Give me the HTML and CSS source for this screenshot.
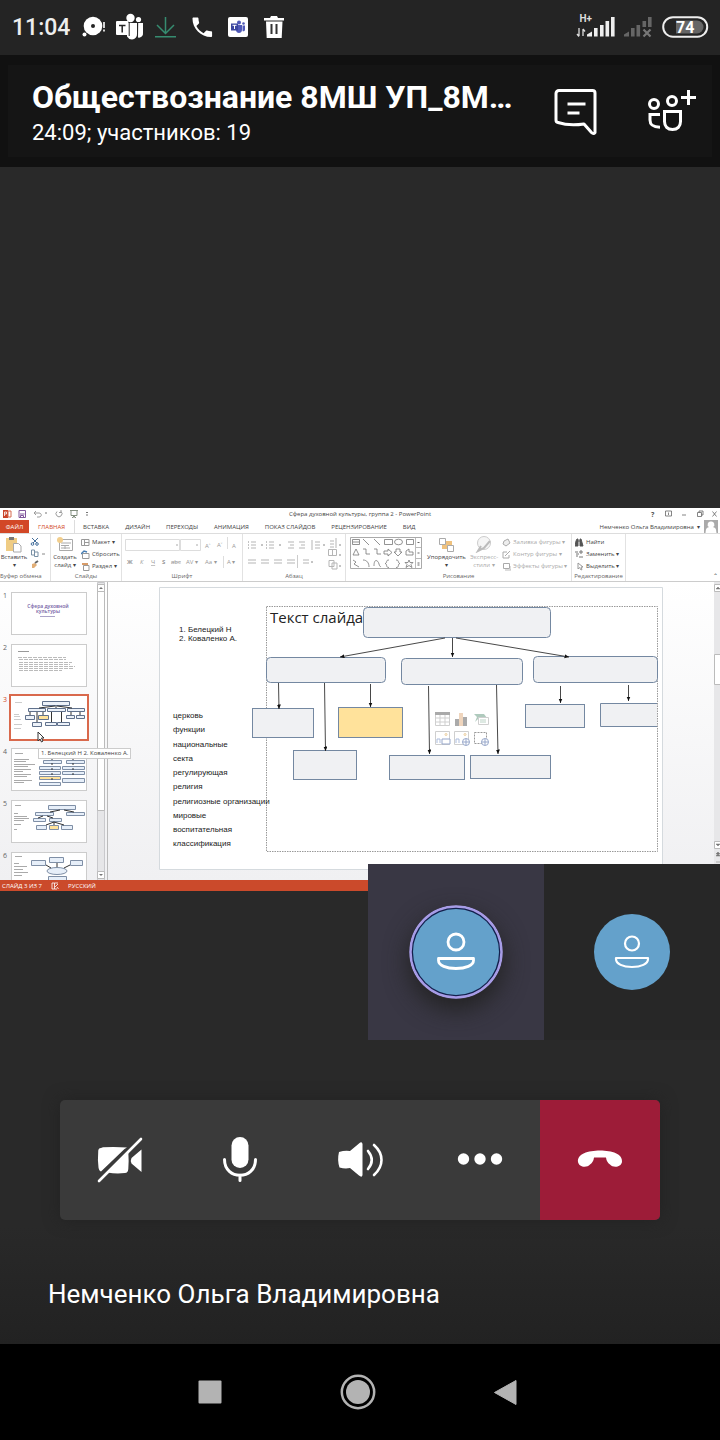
FILE: index.html
```html
<!DOCTYPE html>
<html lang="ru">
<head>
<meta charset="utf-8">
<meta name="viewport" content="width=device-width, initial-scale=1">
<title>Обществознание 8МШ</title>
<link rel="stylesheet" href="styles.css">
</head>
<body>
<div class="phone">
  <div class="statusbar">
    <time class="clock">11:04</time>
    <svg class="notices" width="206" height="32" viewBox="80 12 206 32" aria-hidden="true">
      <circle cx="93" cy="26" r="9.300" fill="#fff"/><circle cx="93" cy="26" r="2" fill="#242424"/><circle cx="84.500" cy="34.500" r="2" fill="#fff"/><path d="M104 22v6M104 29.500v2" stroke="#fff" stroke-width="1.600"/>
      <g fill="#fff"><circle cx="130.500" cy="18" r="4.200"/><circle cx="138.500" cy="19.500" r="2.600"/><path d="M127 23h10v11a5 5 0 0 1-5 5.500a6 6 0 0 1-5-3zM138.200 23h4.800v10a4 4 0 0 1-5 4.500z"/><rect x="116" y="21" width="12.500" height="14" rx="1"/></g><path d="M119 25.500h6.500M122.200 25.500v7" stroke="#242424" stroke-width="1.500"/><path d="M129.200 22v14" stroke="#242424"/>
      <path d="M165.500 17v16M157 25l8.500 8.500 8.500-8.500M155 36.700h21" fill="none" stroke="#368c70" stroke-width="1.500"/>
      <path transform="translate(189.200 14.200) scale(1.090)" fill="#fff" d="M6.600 10.800c1.400 2.800 3.800 5.100 6.600 6.600l2.200-2.200c.3-.3.700-.4 1-.2 1.100.4 2.300.6 3.600.6.600 0 1 .4 1 1V20c0 .6-.4 1-1 1C10.600 21 3 13.400 3 4c0-.6.400-1 1-1h3.500c.6 0 1 .4 1 1 0 1.300.2 2.500.6 3.600.1.300 0 .7-.2 1z"/>
      <rect x="228" y="17" width="20" height="20" rx="2" fill="#fff"/><g fill="#5059b8"><circle cx="239" cy="22.500" r="2"/><circle cx="243.500" cy="23.500" r="1.300"/><path d="M236 25h6v5c0 4-6 4-6 0zM242.500 25.500h2.500v4c0 2-2.500 2.500-2.500 1z"/></g><rect x="231" y="23.500" width="7" height="7" fill="#3b459f"/><path d="M232.500 25.300h4M234.500 25v4" stroke="#fff"/>
      <path d="M264 18h6l1-2h6l1 2h6v2.500h-20zM266 21.500h16.500l-.8 16.500h-15z" fill="#fff"/><path d="M271.500 24v10M276.500 24v10" stroke="#333" stroke-width="2"/>
    </svg>
    <svg class="signals" width="134" height="30" viewBox="575 13 134 30" role="img" aria-label="H+, заряд 74">
      <text class="net" x="579.500" y="22">H+</text>
      <path d="M579 28v8m-2-2l2 2.500M583 36v-7m0 0l2 2.500" stroke="#ddd" stroke-width="1.300" fill="none"/>
      <path fill="#eee" d="M587 36.500v-2l5-3v5zM594 28h3.600v8.500H594zM600 25h3.600v11.500H600zM605.500 21h3.600v15.500h-3.600zM611 17h3.600v19.500H611z"/>
      <path fill="#666" d="M624 36.500v-2l5-3v5zM631 28h3.600v8.500H631zM636.500 25h3.600v11.500h-3.600zM642.500 21h3.600v6h-3.600zM648 17h3.600v10H648z"/><path d="M643.500 29.500l7 7m0-7l-7 7" stroke="#777" stroke-width="2.200"/>
      <rect x="663.200" y="17.200" width="44" height="19.500" rx="9.700" fill="none" stroke="#eee" stroke-width="2"/><path d="M676 20.500h21a6.500 6.500 0 0 1 0 13h-21z" fill="#666"/>
      <text class="charge" x="676" y="33">74</text>
    </svg>
  </div>

  <header class="callhead">
    <div class="headtext">
      <h1>Обществознание 8МШ УП_8М…</h1>
      <p>24:09; участников: 19</p>
    </div>
    <button class="iconbtn" aria-label="Чат">
      <svg width="44" height="48" viewBox="0 0 44 48" fill="none" stroke="#fff" stroke-width="3" stroke-linejoin="round"><path d="M5 3.500h33.500a2.500 2.500 0 0 1 2.500 2.500v39.500q-1.500 2-3.500 0l-7.500-8.500c-8 1.200-18 1.200-26-1.500a2.500 2.500 0 0 1-2-2.500V6.500a3 3 0 0 1 3-3z"/><path d="M13.500 17h18M13.500 26h12"/></svg>
    </button>
    <button class="iconbtn" aria-label="Добавить участников">
      <svg width="50" height="44" viewBox="0 2 50 44" fill="none" stroke="#fff" stroke-width="3"><g transform="translate(1 3)"><circle cx="7" cy="14" r="4.500"/><circle cx="25" cy="11" r="4.500"/><path d="M13 24.500H3v5.500c0 5 3 7 10 7.200M17.500 21.500h16v10c0 5-3 8-8 8s-8-3-8-8zM41.500 0v15M34 7.500h15"/></g></svg>
    </button>
  </header>

  <main class="stage">
    <section class="share" aria-label="Демонстрация экрана">
      <div class="titlebar">
        <svg width="90" height="10" viewBox="0 0 90 10" aria-hidden="true"><path d="M3 1h5v8H3z" fill="#c9442a"/><path d="M8 2h3v6H8z" fill="none" stroke="#d66b50"/><path d="M4.500 7V3h2v2h-2" stroke="#fff" fill="none" stroke-width=".8"/><path d="M19 1.500h6.500v7H19zM20 5h4.500M20.500 8V6.500h3V8" fill="none" stroke="#80569c"/><path d="M34 4h5c3 0 3 4 0 4h-2M36 2l-2 2 2 2M61 2.500a3 3 0 1 1-4 0M61 1v2.500h-2" fill="none" stroke="#9c9c9c"/><path d="M70 1.500h8M71 2v4.500h6V2M74 7v2M72 9l2-2 2 2" fill="none" stroke="#849080"/><path d="M45 4h2M86 3.500h2M86 6h2" stroke="#777"/></svg>
        <span class="doc">Сфера духовной культуры, группа 2 - PowerPoint</span>
        <svg class="winbtns" width="70" height="10" viewBox="648 0 70 10" aria-hidden="true"><text class="small" x="651" y="7.500">?</text><path d="M665.500 2h6v5h-6zM668.500 6V3.500M682 6h4M697.500 3.500h4v4h-4zM699 3.500V2h4v4h-1.500M712.500 2.500l4 5m0-5l-4 5" fill="none" stroke="#666" stroke-width=".8"/></svg>
      </div>
      <div class="tabs">
        <b class="file">ФАЙЛ</b><span class="active">ГЛАВНАЯ</span><span>ВСТАВКА</span><span>ДИЗАЙН</span><span>ПЕРЕХОДЫ</span><span>АНИМАЦИЯ</span><span>ПОКАЗ СЛАЙДОВ</span><span>РЕЦЕНЗИРОВАНИЕ</span><span>ВИД</span>
        <em>Немченко Ольга Владимировна&nbsp; ▾</em>
        <svg width="14" height="13" viewBox="0 0 14 13" aria-hidden="true"><path d="M0 0h14v13H0z" fill="#aaa"/><path d="M7 1.500a3 3 0 0 1 2 5.500c3 1 3 2 3.500 6h-11c.5-4 .5-5 3.500-6a3 3 0 0 1 2-5.500z" fill="#fff"/></svg>
      </div>
      <div class="ribbon">
        <div class="group">
          <div class="tools">
            <div class="big"><svg width="18" height="17" viewBox="0 0 18 17"><path d="M1 2h11v13H1z" fill="#efcc84"/><path d="M4 1h5v3H4z" fill="#777"/><path d="M8.500 7.500h5l2.500 2.500v6H8.500z" fill="#fff" stroke="#aaa"/></svg><span>Вставить</span><i>▾</i></div>
            <svg width="16" height="34" viewBox="0 0 16 34"><path d="M2 2l5 5M8 2L3 7" stroke="#456f9c"/><circle cx="2.500" cy="8" r="1.300" fill="none" stroke="#456f9c"/><circle cx="7" cy="8" r="1.300" fill="none" stroke="#456f9c"/><path d="M1.500 14h3v5h-3zM4.500 16H8v4.500H4.500z" fill="#fff" stroke="#7890a5"/><path d="M12 18h3" stroke="#888"/><path d="M2 28l3-1 2 2-3 3-2 0z" fill="#e1ae77"/><path d="M5 27l3-2" stroke="#666" stroke-width="2"/></svg>
          </div>
          <small class="start">Буфер обмена</small>
        </div>
        <div class="group">
          <div class="tools">
            <div class="big"><svg width="18" height="17" viewBox="0 0 18 17"><path d="M3.500 3.500h13v11h-13zM5 7h10M9 9v4M5 9.500h8M5 12h9" fill="none" stroke="#aaa"/><circle cx="4" cy="4" r="3" fill="#f2ce8c"/></svg><span>Создать</span><span>слайд ▾</span></div>
            <ul><li><svg width="9" height="9" viewBox="0 0 9 9"><path d="M.5 1.500h7.500v6H.5zM3.500 2v5M3.500 4.500H8" fill="none" stroke="#999"/></svg>Макет ▾</li><li><svg width="9" height="9" viewBox="0 0 9 9"><path d="M1.500 3.500H8v5H1.500z" fill="none" stroke="#999"/><path d="M0 4l3-3 3 1" stroke="#477eb4" fill="none" stroke-width="1.500"/></svg>Сбросить</li><li><svg width="9" height="9" viewBox="0 0 9 9"><path d="M2.500 3.500H8v5H2.500z" fill="none" stroke="#999"/><path d="M1 2h6" stroke="#d89c69" stroke-width="2"/></svg>Раздел ▾</li></ul>
          </div>
          <small>Слайды</small>
        </div>
        <div class="group">
          <div class="tools">
            <svg class="fill" viewBox="124 536 118 36" aria-hidden="true"><path d="M126.500 539.500h54v11h-54zM181.500 539.500h20v11h-20z" fill="#fff" stroke="#ddd"/><path d="M177 545h2M197 545h2" stroke="#aaa"/><g class="pale"><text x="206" y="548">A˄</text><text x="218" y="547">A˅</text><text x="233" y="548">A</text><text x="128" y="564" font-weight="bold">Ж</text><text x="141" y="564" font-style="italic">К</text><text x="152" y="564" text-decoration="underline">Ч</text><text x="163" y="564" font-weight="bold">S</text><text x="172" y="564" text-decoration="line-through">abc</text><text x="187" y="564">AV ▾</text><text x="206" y="564">Aa ▾</text><text x="228" y="564">A ▾</text></g><path d="M228.500 537v12M224.500 556v12" stroke="#ddd"/></svg>
          </div>
          <small>Шрифт</small>
        </div>
        <div class="group">
          <div class="tools">
            <svg class="fill" viewBox="244 536 102 36" aria-hidden="true"><path d="M252 542h5M252 545h5M252 548h5M270 542h5M270 545h5M270 548h5M289 542h6M291 545h4M289 548h6M300 542h6M302 545h4M300 548h6M316 542h5M316 545h5M316 548h5M313 540v10M249 560h8M249 563h8M262 560h8M262 563h8M275 560h8M275 563h8M288 560h8M288 563h8M304 560h6M304 563h6M331 541h4M331 544h4M331 547h4M337 538v10" stroke="#b5b5b5"/><path d="M249 542h1M249 545h1M249 548h1M267 542h1M267 545h1M267 548h1M262 545h2M280 545h2M324 545h2M312 562h2M340 545h2M340 555h2M340 566h2" stroke="#888"/><path d="M298.500 555v13" stroke="#ccc"/><path d="M329.500 549.500h8v6h-8zM333.500 550v5M330 560.500h5v6h-5zM333 563h5v6h-5z" fill="none" stroke="#b5b5b5"/></svg>
          </div>
          <small>Абзац</small>
        </div>
        <div class="group">
          <div class="tools wide">
            <svg width="74" height="36" viewBox="349 536 74 36" aria-hidden="true"><path d="M350.500 537.500h71v31h-71z" fill="#fff" stroke="#aaa"/><path d="M415.500 538v30M416 547.500h5M416 558.500h5" stroke="#bbb"/><g fill="none" stroke="#777" stroke-width=".8"><path d="M352.500 539.500h7v5h-7zM353 542h6M363 539l6 6M374 539l6 6M384.500 539.500h8v5h-8zM406.500 539.500h7v5h-7zM353 555l3-6 3 6zM363 549h3v5h4M374 549h3v5h4M384 551h4v-2l4 3.500-4 3.500v-2h-4zM396 549h4v3h2l-4 4-4-4h2zM406 555v-4l3-2v3h4v3zM353 560l3 2-2 2 5 3M363 560c4 0 6 3 6 7M374 566c0-8 4-6 5-2s2 2 2 2M389 560c-4 0-1 3-4 3.500 3 .5 0 4 4 4M396 560c4 0 1 3 4 3.500-3 .5 0 4-4 4M409 560l1 2.500h3l-2 2 1 3-3-2-3 2 1-3-2-2h3z"/><ellipse cx="398.500" cy="542" rx="4" ry="2.800"/></g><path d="M417.500 542.500h2M417.500 553h2M417.500 563h2M417.500 565h2" stroke="#666"/></svg>
            <div class="big"><svg width="18" height="17" viewBox="0 0 18 17"><path d="M5 5h10v8H5z" fill="#efc17d"/><path d="M2.500 2.500h6v6h-6zM10.500 9.500h6v6h-6z" fill="#fff" stroke="#aaa"/></svg><span>Упорядочить</span><i>▾</i></div>
            <div class="big dim"><svg width="18" height="17" viewBox="0 0 18 17"><circle cx="9" cy="7" r="6.500" fill="#f5f5f5" stroke="#ccc"/><path d="M15 5l-6 7-6 3 3-5" fill="none" stroke="#bbb" stroke-width="2"/></svg><span>Экспресс-</span><span>стили ▾</span></div>
            <ul class="dim"><li><svg width="9" height="9" viewBox="0 0 9 9"><path d="M2 3l4-2 2 4-4 3-3-2z" fill="#eee" stroke="#aaa"/></svg>Заливка фигуры ▾</li><li><svg width="9" height="9" viewBox="0 0 9 9"><path d="M7 5v3H1V2h4M3 6l5-5" fill="none" stroke="#aaa"/></svg>Контур фигуры ▾</li><li><svg width="9" height="9" viewBox="0 0 9 9"><path d="M1.500 1.500h6v5h-6z" fill="#fff" stroke="#aaa"/><path d="M3 8h6V4" fill="none" stroke="#bbb"/></svg>Эффекты фигуры ▾</li></ul>
          </div>
          <small>Рисование</small>
        </div>
        <div class="group">
          <div class="tools wide">
            <ul><li><svg width="9" height="9" viewBox="0 0 9 9"><path d="M1 3l1-2h1v7H0zM5 1h1l2 7H5zM3 3h2" fill="#555" stroke="#555"/></svg>Найти</li><li><svg width="9" height="9" viewBox="0 0 9 9"><path d="M0 2h3M1 4h3M4 7h4M5 1h2v2H5zM1 6h2" stroke="#777" fill="none"/></svg>Заменить ▾</li><li><svg width="9" height="9" viewBox="0 0 9 9"><path d="M3 1v6l1.500-1.500L6 8l1-.5L6 5h2z" fill="#fff" stroke="#999"/></svg>Выделить ▾</li></ul>
          </div>
          <small>Редактирование</small>
        </div>
        <div class="rest">⌃</div>
      </div>

      <div class="workspace">
        <ol class="thumbs">
          <li>1<svg width="76" height="43" viewBox="0 0 76 43"><text class="tt" x="37" y="16">Сфера духовной</text><text class="tt" x="37" y="21">культуры</text><path d="M29 24.500h15" stroke="#aaa3c8"/></svg></li>
          <li>2<svg width="76" height="43" viewBox="0 0 76 43"><path d="M7 7.500h11" stroke="#999"/><path d="M7 13.500h48M8 15.500h47M8 18.500h53M8 20.500h51M8 22.500h56M8 24.500h55M8 26.500h43" stroke="#bbb" stroke-dasharray="4 1"/></svg></li>
          <li class="current">3<svg width="76" height="43" viewBox="0 0 76 43"><g fill="#edf2f9" stroke="#60718c"><path d="M31.500 5.500h27v4h-27zM17.500 12.500h17v3h-17zM36.500 12.500h18v3h-18zM56.500 12.500h17v3h-17zM14.500 19.500h9v4h-9zM55.500 19.500h8v3h-8zM65.500 19.500h8v3h-8zM21.500 26.500h9v4h-9zM34.500 26.500h11v3h-11zM46.500 26.500h12v3h-12z"/><path d="M27.500 19.500h10v4h-10z" fill="#ffe29b"/></g><path d="M44 10l-16 2M45 10v2M46 10l15 2M19 16v3M26 16v10M32 16v3M40.500 16v10M50.500 16v10M60 16v3M69 16v3" stroke="#333" fill="none"/><path d="M4 6.500h7M3 18.500h5M3 20.500h6M3 23.500h7M3 28.500h8M3 32.500h7" stroke="#ccc"/></svg></li>
          <li>4<svg width="76" height="43" viewBox="0 0 76 43"><g fill="#e7eff9" stroke="#7f8fa6"><path d="M32.500 12.500h18v3h-18zM55.500 12.500h18v3h-18zM28.500 18.500h21v3h-21zM51.500 18.500h22v3h-22zM28.500 23.500h21v3h-21zM51.500 23.500h22v3h-22zM51.500 30.500h22v4h-22zM28.500 34.500h21v3h-21z"/><path d="M28.500 28.500h21v3h-21z" fill="#ffe29b"/></g><path d="M41 10v24M62 10v20M43 10l6-2" stroke="#333" fill="none" stroke-dasharray="2 3"/><path d="M4 5.500h8M3 11.500h15M3 13.500h12M3 16.500h21M3 18.500h14M3 21.500h17M3 23.500h9M3 26.500h17M3 28.500h13M3 32.500h18M3 34.500h10" stroke="#aaa"/></svg></li>
          <li>5<svg width="76" height="43" viewBox="0 0 76 43"><g fill="#e7eff9" stroke="#7f8fa6"><path d="M37.500 5.500h27v4h-27zM24.500 12.500h18v3h-18zM55.500 12.500h18v3h-18zM22.500 18.500h12v3h-12zM38.500 18.500h12v3h-12zM25.500 25.500h10v4h-10zM50.500 25.500h11v4h-11z"/><path d="M38.500 25.500h9v4h-9z" fill="#ffe29b"/></g><path d="M49 10l-10 2M53 10l10 2M32 16l-5 2M36 16l6 2M43 22l-8 3M43 22v3M43 22l10 3" stroke="#333"/><path d="M4 5.500h6M3 13.500h4M3 16.500h13M3 18.500h15M3 20.500h10M3 24.500h7M3 29.500h3" stroke="#aaa"/></svg></li>
          <li>6<svg width="76" height="43" viewBox="0 0 76 43"><g fill="#e7eff9" stroke="#7f8fa6"><path d="M38.500 5.500h14v5h-14zM20.500 8.500h14v5h-14zM59.500 8.500h12v5h-12zM37.500 24.500h18v4h-18z"/><ellipse cx="46" cy="19" rx="10" ry="3.500"/></g><path d="M35 13l5 3M46 11v4M59 13l-6 3" stroke="#333"/><path d="M4 4.500h7M3 11.500h5M3 14.500h13M3 17.500h9M3 20.500h14M3 23.500h8" stroke="#aaa"/></svg></li>
        </ol>
        <svg class="pointer" width="8" height="12" viewBox="0 0 8 12" aria-hidden="true"><path d="M1 1v9l2-2 1.500 3 1.500-1L4.500 7H7z" fill="#fff" stroke="#333"/></svg>
        <div class="tip">1. Белецкий Н 2. Коваленко А.</div>
        <svg class="bar" width="10" height="298" viewBox="97 582 10 298" aria-hidden="true"><path d="M97.500 582.500h7v298h-7z" fill="#e6e6e8" stroke="#c9c9cc"/><path d="M97.500 584.500h7v7h-7zM97.500 591.500h7v219h-7zM97.500 871.500h7v7h-7z" fill="#fff" stroke="#bbb"/><path d="M99 589l2-2 2 2zM99 874l2 2 2-2z" fill="#777"/></svg>
        <svg class="canvas" viewBox="107 582 607 298" role="img" aria-label="Слайд 3">
          <defs><marker id="tip" markerUnits="userSpaceOnUse" markerWidth="6" markerHeight="6" refX="4.500" refY="2" orient="auto"><path d="M0 0l4.500 2L0 4z" fill="#111"/></marker></defs>
          <path d="M107.500 582v298" stroke="#bbb"/>
          <path d="M159.500 587.500h503v282h-503z" fill="#fff" stroke="#d5dade"/>
          <path d="M266.500 606.500h391v245h-391z" fill="none" stroke="#999" stroke-dasharray="1.500 1"/>
          <g class="names"><text x="179" y="632">1. Белецкий Н</text><text x="179" y="641">2. Коваленко А.</text></g>
          <g class="names"><text x="173" y="718">церковь</text><text x="173" y="732">функции</text><text x="173" y="747">национальные</text><text x="173" y="761">секта</text><text x="173" y="775">регулирующая</text><text x="173" y="789">религия</text><text x="173" y="804">религиозные организации</text><text x="173" y="818">мировые</text><text x="173" y="832">воспитательная</text><text x="173" y="846">классификация</text></g>
          <g fill="#f0f1f3" stroke="#7488a1">
            <rect x="363.500" y="607.500" width="187" height="30" rx="4"/><rect x="266.500" y="657.500" width="119" height="25" rx="4"/><rect x="401.500" y="658.500" width="121" height="26" rx="4"/><rect x="533.500" y="656.500" width="124" height="26" rx="4"/>
            <rect x="252.500" y="708.500" width="61" height="29"/><rect x="338.500" y="707.500" width="64" height="30" fill="#ffe29b"/><rect x="293.500" y="750.500" width="63" height="29"/><rect x="389.500" y="755.500" width="75" height="24"/><rect x="470.500" y="755.500" width="80" height="23"/><rect x="525.500" y="704.500" width="59" height="23"/><path d="M657 703.500h-56.500v23H657"/>
          </g>
          <text class="slidetitle" x="270" y="623">Текст слайда</text>
          <g stroke="#333" stroke-width=".9" fill="none"><path marker-end="url(#tip)" d="M445 638L340 657"/><path marker-end="url(#tip)" d="M452.500 638v19"/><path marker-end="url(#tip)" d="M456 638l113 19"/><path marker-end="url(#tip)" d="M278.500 683l.5 26"/><path marker-end="url(#tip)" d="M324.500 683l1 68"/><path marker-end="url(#tip)" d="M370.500 684v23"/><path marker-end="url(#tip)" d="M428.500 686l1 68"/><path marker-end="url(#tip)" d="M496.500 685l1.500 69"/><path marker-end="url(#tip)" d="M560.500 686v17"/><path marker-end="url(#tip)" d="M628.500 685v16"/></g>
          <g fill="none" stroke="#cfcfcf"><path d="M435.500 714.500h14v11h-14zM435 718h14M435 722h14M440 714v12M445 714v12"/><path d="M435 713.500h15" stroke="#aaa" stroke-width="3"/><path d="M457 719v7M465 717v9" stroke="#aaa" stroke-width="4"/><path d="M461 713v13" stroke="#efd5bd" stroke-width="4"/><path d="M474 714h10l3 4h-8l-4 4 2-5z" fill="#afcabd" stroke="none"/><path d="M478.500 717.500h10v7h-10z" fill="#fff"/><path d="M480 720h6M480 722h6" stroke="#bcd3c6"/><path d="M435.500 731.500h14v13h-14zM454.500 731.500h14v13h-14z"/><path d="M442 739h8v5h-8z" fill="#fff" stroke="#97a7ca"/><path d="M437 743v-4h3v4M456 743v-4h3v4" stroke="#adbddd"/><circle cx="446" cy="734.500" r="1" stroke="#eccd9a"/><circle cx="465" cy="734.500" r="1" stroke="#eccd9a"/><path d="M474.500 732.500h12v11h-12z" stroke="#999" stroke-dasharray="2 1"/><g stroke="#97a7ca" fill="#fff"><circle cx="466" cy="742" r="3.500"/><circle cx="485" cy="742" r="3.500"/></g><path d="M463 742h6M466 739v6M482 742h6M485 739v6" stroke="#97a7ca"/></g>
        </svg>
        <svg width="6" height="298" viewBox="714 582 6 298" aria-hidden="true"><path d="M714 582h6v298h-6z" fill="#e7e7e9"/><path d="M714.500 584.500h7v7h-7zM714.500 654.500h7v30h-7zM714.500 841.500h7v7h-7z" fill="#fff" stroke="#bbb"/><path d="M716 589l2-2 2 2zM716 844l2 2 2-2zM716 854l2-2 2 2zM716 856l2-2 2 2zM716 862h4" fill="#777" stroke="#777" stroke-width=".5"/></svg>
      </div>
      <div class="pptstatus"><span>СЛАЙД 3 ИЗ 7</span><svg width="8" height="8" viewBox="0 0 8 8" aria-hidden="true"><path d="M1 1h2.500v6H1zM3.500 1H7M3.500 7H6M4 5l3-3M6 5l1.500 2" fill="none" stroke="#fff" stroke-width=".8"/></svg><span>РУССКИЙ</span></div>
    </section>

    <div class="people">
      <div class="tile speaking"><svg width="94" height="94" viewBox="0 0 94 94" role="img" aria-label="Участник"><circle cx="47" cy="47" r="45.500" fill="#14204d" stroke="#a79ce6" stroke-width="2.500"/><circle cx="47" cy="47" r="43" fill="#64a1cb"/><g fill="none" stroke="#fff" stroke-width="2.800"><circle cx="47" cy="37" r="8"/><path d="M29.500 53.500h35v2c0 5-8 8-17.500 8s-17.500-3-17.500-8z" stroke-linejoin="round"/></g></svg></div>
      <div class="tile"><svg width="76" height="76" viewBox="0 0 76 76" role="img" aria-label="Участник"><circle cx="38" cy="38" r="38" fill="#64a1cb"/><g fill="none" stroke="#fff" stroke-width="2.200"><circle cx="38" cy="29.500" r="7"/><path d="M22 44h32v1c0 5-7 8-16 8s-16-3-16-8z" stroke-linejoin="round"/></g></svg></div>
    </div>

    <div class="controls">
      <button aria-label="Камера выключена"><svg width="48" height="48" viewBox="0 1 48 48"><path d="M5 13Q2 13 2.200 17Q1.500 25 2.500 32.500Q3 36 5 36.500L28.500 14 31 12.500Q20 11.500 7 12.200zM32.300 16.500L11.500 37.500Q20 39 29 38Q32 38 32.300 34Q33 26 32.300 16.500zM45.500 14.500L35.500 23Q34 26 35.500 28.500L45.500 37z" fill="#fff"/><path d="M3 46L45 4" stroke="#fff" stroke-width="2.600" stroke-linecap="round"/></svg></button>
      <button aria-label="Микрофон"><svg width="48" height="48" viewBox="0 1 48 48"><rect x="15.500" y="2" width="17" height="31" rx="8.500" fill="#fff"/><path d="M8.500 24.500c0 21 31 21 31 0M24 40v5.500" fill="none" stroke="#fff" stroke-width="3" stroke-linecap="round"/></svg></button>
      <button aria-label="Динамик"><svg width="48" height="48" viewBox="0 1 48 48"><path d="M3 17Q9 15 14 16L23 8.500Q26 6 26.500 9V40Q26 43 23 40.500L14 33Q9 34 3.500 32.500Q1 25 3 17z" fill="#fff"/><path d="M32 16c5 6 5 12 0 18M38 10c10 9 10 21 0 30" fill="none" stroke="#fff" stroke-width="2.600" stroke-linecap="round"/></svg></button>
      <button aria-label="Ещё"><svg width="48" height="48" viewBox="0 1 48 48" fill="#fff"><circle cx="7.500" cy="24" r="5.700"/><circle cx="24" cy="24" r="5.700"/><circle cx="40.500" cy="24" r="5.700"/></svg></button>
      <button class="hangup" aria-label="Завершить вызов"><svg width="48" height="48" viewBox="0 1 48 48"><path d="M2 27C1 19 12 15.500 24 15.500S47 19 46 27C45 32.500 37 33 34 29.500Q30.500 27 30 22.500H18Q17.500 27 14 29.500C11 33 3 32.500 2 27z" fill="#fff"/></svg></button>
    </div>
    <p class="speaker">Немченко Ольга Владимировна</p>
  </main>

  <nav class="navbar">
    <button aria-label="Недавние"><svg width="36" height="36" viewBox="0 0 36 36"><rect x="6.500" y="6.500" width="23" height="23" rx="1" fill="#b3b3b3"/></svg></button>
    <button aria-label="Домой"><svg width="36" height="36" viewBox="0 0 36 36"><circle cx="18" cy="18" r="16.200" fill="none" stroke="#b3b3b3" stroke-width="2.500"/><circle cx="18" cy="18" r="12" fill="#b3b3b3"/></svg></button>
    <button aria-label="Назад"><svg width="36" height="36" viewBox="0 0 36 36"><path d="M6.500 18.500L28 6.500v24z" fill="#b3b3b3" stroke="#b3b3b3" stroke-linejoin="round"/></svg></button>
  </nav>
</div>
</body>
</html>
```

FILE: styles.css
```css
* { box-sizing: border-box; }
body, h1, p, ul, ol { margin: 0; padding: 0; }
ul, ol { list-style: none; }
body { background: #292929; color: #fff; font-family: Roboto, "Noto Sans", sans-serif; }
svg { display: block; flex: none; }
button { border: 0; padding: 0; background: none; color: inherit; display: grid; place-items: center; }

.phone { min-height: 100vh; display: flex; flex-direction: column; }
.statusbar { height: 55px; padding: 0 11px 0 12px; background: #242424; display: flex; align-items: center; }
.clock { width: 68px; font-size: 23px; font-weight: 500; line-height: 32px; color: #eee; }
.signals { margin-left: auto; }
.net { font-size: 10px; font-weight: 700; fill: #ddd; }
.charge { font-size: 16px; font-weight: 700; fill: #fff; }

.callhead { height: 112px; padding: 0 16px 0 24px; border: solid #111; border-width: 10px 8px; background: #151515; display: flex; align-items: center; gap: 48px; }
.headtext { flex: 1; min-width: 0; padding-top: 4px; }
.headtext h1 { font-size: 32px; line-height: 40px; font-weight: 700; white-space: nowrap; }
.headtext p { font-size: 22px; line-height: 32px; }

.stage { flex: 1; display: flex; flex-direction: column; background: linear-gradient(#292929 90%, #222); }
.share { margin-top: auto; background: #fff; color: #444; font: 6px/8px "Open Sans", "Noto Sans", sans-serif; white-space: nowrap; overflow: hidden; }
.titlebar { height: 12px; display: grid; grid-template-columns: 1fr auto 1fr; align-items: center; }
.winbtns { justify-self: end; margin-right: 2px; }
.small { font-size: 7px; font-weight: 700; fill: #555; }
.tabs { height: 14px; display: flex; align-items: stretch; padding-right: 2px; line-height: 14px; border-bottom: 1px solid #ddd; }
.tabs span { padding: 0 8px; }
.tabs .file { width: 29px; text-align: center; background: #d24726; color: #fff; font-weight: 400; }
.tabs .active { color: #d24726; padding: 0 9px; border-right: 1px solid #ddd; background: #fff; }
.tabs em { margin-left: auto; font-style: normal; margin-right: 4px; }
.ribbon { height: 48px; display: grid; grid-template-columns: 51fr 71fr 121fr 103fr 226fr 54fr 94fr; border-bottom: 1px solid #ccc; }
.group { min-width: 0; display: flex; flex-direction: column; border-right: 1px solid #e2e2e2; }
.tools { height: 38px; display: flex; gap: 2px; padding-top: 2px; }
.wide { gap: 4px; padding-left: 3px; }
.group small { font-size: 6px; line-height: 8px; text-align: center; color: #666; }
.group .start { text-align: left; }
.big { min-width: 28px; display: flex; flex-direction: column; align-items: center; }
.big i { font-style: normal; }
.tools ul { display: flex; flex-direction: column; }
.tools li { height: 12px; display: flex; align-items: center; gap: 2px; }
.dim { color: #aaa; }
.fill { width: 100%; height: 36px; }
.pale { font-size: 6px; fill: #999; }
.rest { text-align: right; padding: 38px 2px 0 0; }

.workspace { height: 298px; display: grid; grid-template-columns: 97px 10px 1fr 6px; background: linear-gradient(#fff, #f0f0f2); position: relative; overflow: hidden; }
.thumbs { height: 298px; padding: 10px 0 0 3px; display: flex; flex-direction: column; gap: 9px; overflow: hidden; }
.thumbs li { display: flex; gap: 4px; font-size: 7px; line-height: 8px; color: #666; }
.thumbs svg { background: #fff; outline: 1px solid #ccc; outline-offset: -1px; }
.thumbs .current { color: #d24726; }
.thumbs .current svg { outline: 2px solid #d9694c; outline-offset: 0; }
.tt { font-size: 5px; font-weight: 600; fill: #7462a5; text-anchor: middle; }
.pointer { position: absolute; left: 37px; top: 149px; }
.tip { position: absolute; left: 38px; top: 166px; padding: 0 2px; border: 1px solid #ccc; background: #fff; line-height: 9px; z-index: 1; }
.canvas { width: 100%; height: 298px; min-width: 0; }
.slidetitle { font: 15px "Open Sans", "Noto Sans", sans-serif; fill: #222; }
.names { font: 8px "Liberation Sans", Arial, sans-serif; fill: #222; }
.pptstatus { height: 11px; padding-left: 2px; background: #cb4a2b; color: #fff; display: flex; align-items: center; gap: 9px; }

.people { position: relative; align-self: flex-end; margin-top: -27px; display: flex; background: #272727; }
.tile { width: 176px; height: 176px; display: grid; place-items: center; }
.speaking { background: #393744; }
.speaking svg { border-radius: 50%; box-shadow: 0 10px 24px #222; }
.controls { margin: 60px 60px 0; height: 120px; display: grid; grid-template-columns: repeat(5, 1fr); background: #3a3a3a; border-radius: 5px; overflow: hidden; box-shadow: 0 0 16px #222; }
.hangup { background: #9d1c38; }
.speaker { padding: 56px 48px 32px; font-size: 26px; line-height: 36px; }
.navbar { height: 96px; padding-right: 4px; background: #000; display: flex; justify-content: center; align-items: center; gap: 112px; }
```
